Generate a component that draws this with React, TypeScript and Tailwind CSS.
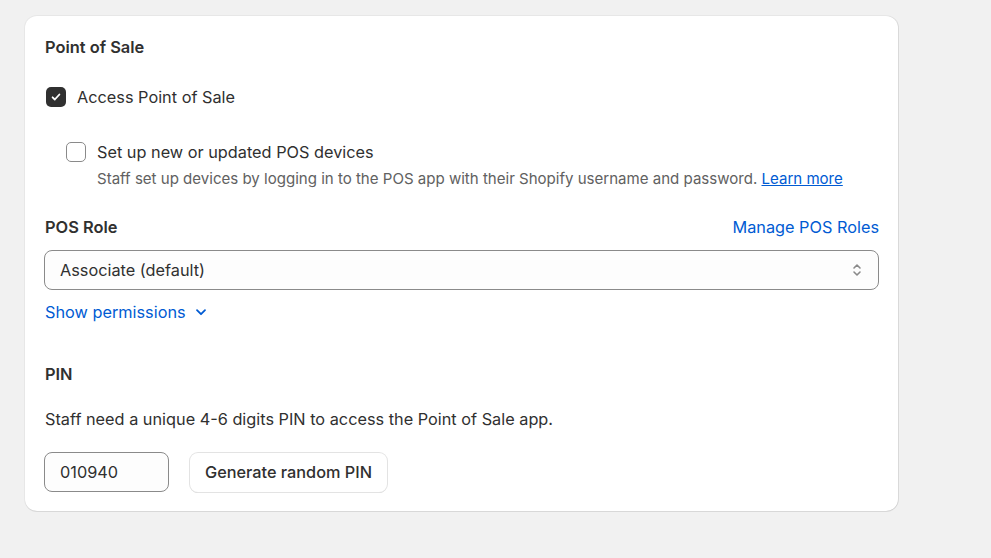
import React from 'react';

const font = { fontFamily: 'Inter, "Noto Sans", sans-serif' };

const Checkbox: React.FC<{ checked?: boolean }> = ({ checked }) =>
  checked ? (
    <span className="flex h-5 w-5 shrink-0 items-center justify-center rounded-[5px] bg-[#303030]">
      <svg width="12" height="12" viewBox="0 0 12 12" fill="none">
        <path d="M2.6 6.3l2.2 2.2 4.6-5" stroke="#fff" strokeWidth="1.8" strokeLinecap="round" strokeLinejoin="round" />
      </svg>
    </span>
  ) : (
    <span className="block h-5 w-5 shrink-0 rounded-[5px] border border-[#8a8a8a] bg-white" />
  );

const App: React.FC = () => {
  return (
    <div className="min-h-[558px] bg-[#f1f1f1] pl-[25px] pt-[16px] text-[#303030]" style={font}>
      <div className="w-[873px] rounded-[12px] bg-white pb-[19px] pl-5 pr-[19px] pt-[20px] shadow-[0_1px_0_0_rgba(26,26,26,0.07),0_0_0_1px_rgba(0,0,0,0.04),1px_0_0_0_rgba(0,0,0,0.06)]">
        <h2 className="text-[16.4px] font-semibold leading-[22px]">Point of Sale</h2>

        <label className="mt-[28px] flex items-center gap-[11px]">
          <span className="ml-[1px]"><Checkbox checked /></span>
          <span className="text-[16.3px] leading-[22px]">Access Point of Sale</span>
        </label>

        <div className="mt-[33px] pl-[21px]">
          <label className="flex items-center gap-[11px]">
            <Checkbox />
            <span className="text-[16.3px] leading-[22px]">Set up new or updated POS devices</span>
          </label>
          <p className="mt-[6px] pl-[31px] text-[15.05px] leading-[20px] text-[#616161]">
            Staff set up devices by logging in to the POS app with their Shopify username and password.{' '}
            <a className="text-[#005bd3] underline">Learn more</a>
          </p>
        </div>

        <div className="mt-[27px] flex items-center justify-between">
          <span className="text-[16.4px] font-semibold leading-[22px]">POS Role</span>
          <a className="text-[16.3px] leading-[22px] text-[#005bd3]">Manage POS Roles</a>
        </div>

        <div className="-ml-px mt-[12px] flex h-10 items-center justify-between rounded-[8px] border border-[#8a8a8a] bg-[#fdfdfd] pl-[15px] pr-[14px]">
          <span className="text-[16.3px] leading-[22px]">Associate (default)</span>
          <svg width="14" height="18" viewBox="0 0 14 18" fill="none">
            <path d="M4 7l3-3 3 3M4 11l3 3 3-3" stroke="#8a8a8a" strokeWidth="1.6" strokeLinecap="round" strokeLinejoin="round" />
          </svg>
        </div>

        <button className="mt-[11px] flex items-center gap-[8px] text-[16.3px] leading-[22px] text-[#005bd3]">
          Show permissions
          <svg width="14" height="14" viewBox="0 0 14 14" fill="none">
            <path d="M3 5.2l4 4 4-4" stroke="#005bd3" strokeWidth="1.8" strokeLinecap="round" strokeLinejoin="round" />
          </svg>
        </button>

        <h3 className="mt-[40px] text-[16.4px] font-semibold leading-[22px]">PIN</h3>
        <p className="mt-[23px] text-[16.3px] leading-[22px]">Staff need a unique 4-6 digits PIN to access the Point of Sale app.</p>

        <div className="-ml-px mt-[22px] flex items-center gap-[21px]">
          <div className="flex h-10 w-[125px] items-center rounded-[8px] border border-[#8a8a8a] bg-[#fdfdfd] pl-[15px] text-[16.3px]">
            010940
          </div>
          <button className="h-[39px] rounded-[8px] bg-white px-[15px] text-[16.3px] font-medium shadow-[0_0_0_1px_#e3e3e3,0_1px_0_0_#d4d4d4]">
            Generate random PIN
          </button>
        </div>
      </div>
    </div>
  );
};

export default App;
